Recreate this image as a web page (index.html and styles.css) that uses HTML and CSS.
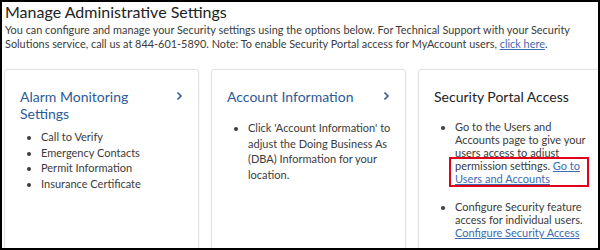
FILE: index.html
```html
<!DOCTYPE html>
<html>

<head>
  <title>Manage Administrative Settings</title>
  <meta name="viewport" content="width=device-width, initial-scale=1.0">
  <link rel="stylesheet" href="styles.css">
</head>

<body>
  <div class="frame">
    <div class="intro">
      <h1>Manage Administrative Settings</h1>
      <p>You can configure and manage your Security settings using the options below. For Technical Support with your Security
        Solutions service, call us at 844-601-5890. Note: To enable Security Portal access for MyAccount users, <a href="#">click here</a>.</p>
    </div>

    <div class="cards">
      <div class="card">
        <div class="card-head">
          <h2 class="card-title link-title">Alarm Monitoring Settings</h2>
          <svg class="chevron" width="7" height="10" viewBox="0 0 7 10"><path d="M1.5 1.5 L5 5 L1.5 8.5" /></svg>
        </div>
        <ul class="card-list">
          <li>Call to Verify</li>
          <li>Emergency Contacts</li>
          <li>Permit Information</li>
          <li>Insurance Certificate</li>
        </ul>
      </div>

      <div class="card">
        <div class="card-head">
          <h2 class="card-title link-title">Account Information</h2>
          <svg class="chevron" width="7" height="10" viewBox="0 0 7 10"><path d="M1.5 1.5 L5 5 L1.5 8.5" /></svg>
        </div>
        <ul class="card-list">
          <li>Click 'Account Information' to adjust the Doing Business As (DBA) Information for your location.</li>
        </ul>
      </div>

      <div class="card card-portal">
        <div class="card-head">
          <h2 class="card-title">Security Portal Access</h2>
        </div>
        <ul class="card-list tight">
          <li>Go to the Users and Accounts page to give your users access to adjust <span class="marked">permission settings. <a href="#">Go to Users and Accounts</a></span></li>
          <li>Configure Security feature<br>access for individual users. <a href="#">Configure Security Access</a></li>
        </ul>
      </div>
    </div>
  </div>
</body>
</html>
```

FILE: styles.css
```css
/* variables */
:root {
  --text: #3b3b3b;
  --title: #222;
  --blue: #2c5a97;
  --link: #3d6bb0;
  --line: #e2e2e2;
}

/* global */
* {
  box-sizing: border-box;
}

body,
html {
  margin: 0;
  padding: 0;
  background: white;
  font-family: Lato, "Open Sans", sans-serif;
  color: var(--text);
}

a {
  color: var(--link);
}

/* frame */
.frame {
  width: 600px;
  height: 250px;
  border: 2px solid black;
  overflow: hidden;
}

.intro {
  padding: 0 3px;
}

.intro h1 {
  margin: 0;
  font-size: 16px;
  font-weight: normal;
  color: var(--title);
  line-height: 20px;
}

.intro p {
  margin: 1px 0 0;
  font-size: 10.9px;
  line-height: 14px;
}

/* cards */
.cards {
  display: flex;
  gap: 12px;
  padding: 18px 0 0 2px;
}

.card {
  flex: 0 0 195px;
  height: 200px;
  border: 1px solid var(--line);
  border-radius: 3px;
  box-shadow: 0 0 2px rgba(0, 0, 0, 0.08);
  padding: 18px 10px 0 15px;
}

.card-portal {
  padding-right: 22px;
}

.card-head {
  display: flex;
  justify-content: space-between;
  align-items: flex-start;
  min-height: 25px;
}

.card-title {
  margin: 0;
  font-size: 14px;
  font-weight: normal;
  line-height: 17px;
  color: var(--title);
}

.link-title {
  color: var(--blue);
  max-width: 140px;
}

.chevron {
  margin: 3px 5px 0 0;
  fill: none;
  stroke: var(--blue);
  stroke-width: 1.6;
}

.card-list {
  margin: 7px 0 0;
  padding-left: 21px;
  font-size: 11px;
  line-height: 15.5px;
}

.card-list.tight {
  line-height: 13px;
}

.card-list.tight li+li {
  margin-top: 15px;
}

/* highlighted link box */
.marked {
  display: inline-block;
  width: 136px;
  margin-left: -4px;
  padding: 0 3px 0 4px;
  outline: 2px solid #e3001b;
}
```
